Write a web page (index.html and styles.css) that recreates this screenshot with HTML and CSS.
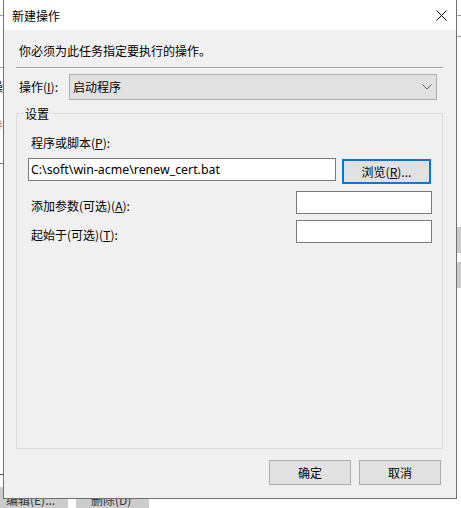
FILE: index.html
```html
<!DOCTYPE html>
<html lang="zh-CN">
<head>
<meta charset="utf-8">
<title>新建操作</title>
<link rel="stylesheet" href="styles.css">
</head>
<body>
<div class="backdrop">
  <div class="bg-line bg-line-a"></div>
  <div class="bg-line bg-line-b"></div>
  <div class="bg-line bg-line-c"></div>
  <div class="bg-line bg-line-d"></div>
  <div class="bg-glyph bg-glyph-a">操</div>
  <div class="bg-glyph bg-glyph-b">参</div>
  <div class="bg-rline bg-rline-a"></div>
  <div class="bg-rline bg-rline-b"></div>
  <div class="bg-rbtn bg-rbtn-a"></div>
  <div class="bg-rbtn bg-rbtn-b"></div>
  <div class="bg-btn bg-btn-edit">编辑(E)...</div>
  <div class="bg-btn bg-btn-del">删除(D)</div>
</div>

<div class="dialog">
  <div class="titlebar">
    <span class="title">新建操作</span>
    <svg class="close" width="11" height="11" viewBox="0 0 11 11"><path d="M0.5 0.5 L10.5 10.5 M10.5 0.5 L0.5 10.5" stroke="#000" stroke-width="1" fill="none"/></svg>
  </div>
  <div class="content">
    <div class="intro">你必须为此任务指定要执行的操作。</div>
    <div class="sep"></div>
    <div class="op-row">
      <span class="op-label">操作(<u>I</u>):</span>
      <div class="combo">
        <span class="combo-text">启动程序</span>
        <svg class="chevron" width="10" height="6" viewBox="0 0 10 6"><path d="M0.5 0.5 L5 5 L9.5 0.5" stroke="#606060" stroke-width="1" fill="none"/></svg>
      </div>
    </div>
    <div class="group">
      <span class="legend">设置</span>
      <div class="field-label">程序或脚本(<u>P</u>):</div>
      <div class="path-row">
        <div class="input input-path">C:\soft\win-acme\renew_cert.bat</div>
        <div class="btn btn-browse">浏览(<u>R</u>)...</div>
      </div>
      <div class="opt-row opt-row-args">
        <span class="opt-label">添加参数(可选)(<u>A</u>):</span>
        <div class="input input-small"></div>
      </div>
      <div class="opt-row opt-row-start">
        <span class="opt-label">起始于(可选)(<u>T</u>):</span>
        <div class="input input-small"></div>
      </div>
    </div>
    <div class="actions">
      <div class="btn btn-action">确定</div>
      <div class="btn btn-action">取消</div>
    </div>
  </div>
</div>
</body>
</html>
```
FILE: styles.css
```css
* { box-sizing: border-box; }
html, body {
  margin: 0;
  padding: 0;
  width: 461px;
  height: 508px;
  overflow: hidden;
  background: #ffffff;
  font-family: "Segoe UI", "Noto Sans", "Noto Sans CJK SC", sans-serif;
  font-size: 12px;
  color: #000;
}
body { position: relative; }
u { text-decoration: underline; text-underline-offset: 1px; }

/* background window pieces */
.backdrop { position: absolute; inset: 0; }
.bg-line { position: absolute; left: 0; width: 3px; height: 1px; background: #a0a0a0; }
.bg-line-a { top: 15px; }
.bg-line-b { top: 67px; }
.bg-line-c { top: 163px; background: #707070; }
.bg-line-d { top: 474px; background: #505050; }
.bg-glyph {
  position: absolute;
  font-family: "Noto Sans CJK SC", sans-serif;
  font-size: 12px;
  line-height: 16px;
}
.bg-glyph-a { left: -9px; top: 79px; }
.bg-glyph-b { left: -9px; top: 117px; color: #c07020; }
.bg-rline { position: absolute; left: 457px; width: 4px; height: 1px; background: #a0a0a0; }
.bg-rline-a { top: 15px; }
.bg-rline-b { top: 36px; }
.bg-rbtn { position: absolute; left: 457px; width: 4px; height: 26px; background: #cccccc; }
.bg-rbtn-a { top: 227px; }
.bg-rbtn-b { top: 262px; }
.bg-btn {
  position: absolute;
  top: 487px;
  height: 26px;
  background: #cccccc;
  font-family: "Noto Sans CJK SC", sans-serif;
  font-size: 12px;
  line-height: 26px;
  color: #333;
}
.bg-btn-edit { left: 0; width: 68px; padding-left: 6px; }
.bg-btn-del { left: 76px; width: 73px; padding-left: 15px; }

/* dialog window */
.dialog {
  position: absolute;
  left: 3px;
  top: -1px;
  width: 454px;
  height: 500px;
  border: 1px solid #707070;
  background: #f0f0f0;
  display: flex;
  flex-direction: column;
}
.titlebar {
  height: 30px;
  flex: none;
  background: #ffffff;
  display: flex;
  align-items: center;
  padding-left: 8px;
  padding-right: 9px;
}
.title {
  flex: 1;
  font-family: "Noto Sans CJK SC", sans-serif;
  line-height: 16px;
  padding-top: 1px;
}
.close { display: block; margin-top: 0; }

.content {
  flex: 1;
  display: flex;
  flex-direction: column;
}
.intro {
  margin: 13px 0 0 15px;
  line-height: 16px;
  font-family: "Noto Sans CJK SC", sans-serif;
}
.sep {
  margin: 8px 13px 0 12px;
  height: 2px;
  border-top: 1px solid #a0a0a0;
  border-bottom: 1px solid #ffffff;
}
.op-row {
  margin: 5px 19px 0 15px;
  display: flex;
  align-items: center;
}
.op-label {
  width: 50px;
  line-height: 16px;
  font-family: "Noto Sans CJK SC", sans-serif;
}
.combo {
  flex: 1;
  height: 26px;
  border: 1px solid #adadad;
  background: #e1e1e1;
  display: flex;
  align-items: center;
  padding-left: 3px;
  padding-right: 4px;
}
.combo-text { flex: 1; font-family: "Noto Sans CJK SC", sans-serif; line-height: 16px; }
.chevron { display: block; }

.group {
  margin: 13px 13px 0 12px;
  height: 336px;
  border: 1px solid #dcdcdc;
  display: flex;
  flex-direction: column;
}
.legend {
  align-self: flex-start;
  margin: -8px 0 0 7px;
  padding: 0 1px;
  background: #f0f0f0;
  line-height: 16px;
  font-family: "Noto Sans CJK SC", sans-serif;
}
.field-label {
  margin: 13px 0 0 14px;
  line-height: 16px;
  font-family: "Noto Sans CJK SC", sans-serif;
}
.path-row {
  margin: 7px 0 0 11px;
  display: flex;
  align-items: flex-start;
  height: 26px;
}
.input {
  height: 23px;
  border: 1px solid #7a7a7a;
  background: #ffffff;
  line-height: 21px;
  padding-left: 2px;
  white-space: nowrap;
  overflow: hidden;
}
.input-path { width: 308px; font-size: 12.35px; }
.btn {
  display: flex;
  align-items: center;
  justify-content: center;
  background: #e1e1e1;
  border: 1px solid #adadad;
  font-family: "Noto Sans CJK SC", sans-serif;
  line-height: 16px;
}
.btn-browse {
  margin: 1px 0 0 6px;
  width: 89px;
  height: 25px;
  border: 2px solid #0078d7;
}
.opt-row {
  display: flex;
  align-items: center;
  margin-left: 14px;
  width: 401px;
}
.opt-row-args { margin-top: 7px; }
.opt-row-start { margin-top: 6px; }
.opt-label {
  flex: 1;
  line-height: 16px;
  padding-top: 6px;
  font-family: "Noto Sans CJK SC", sans-serif;
}
.input-small { width: 136px; }

.actions {
  margin: 11px 15px 0 0;
  display: flex;
  justify-content: flex-end;
  gap: 8px;
}
.btn-action { width: 82px; height: 25px; }
```
